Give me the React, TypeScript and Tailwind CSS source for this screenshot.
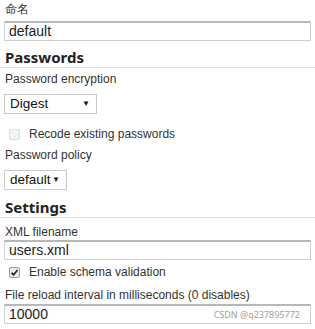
import React from "react";

const label = "text-[12px] text-[#333] [font-family:'Liberation_Sans',Tahoma,sans-serif]";
const heading = "text-[15px] font-bold text-[#222] [font-family:'Noto_Sans',Tahoma,sans-serif]";
const inputBox =
  "h-[20px] w-[307px] border border-[#cfcfcf] border-t-[#b8b8b8] border-t-2 bg-white flex items-center pl-[4px] text-[14px] text-[#222] [font-family:'Liberation_Sans',Arial,sans-serif]";

function Check({ checked, disabled }: { checked?: boolean; disabled?: boolean }) {
  return (
    <div
      className={
        "w-[11px] h-[11px] rounded-[2px] border flex items-center justify-center " +
        (disabled ? "border-[#dcdcdc] bg-[#f2f2f2]" : "border-[#9a9a9a] bg-[#e9e9e9]")
      }
    >
      {checked && (
        <svg width="9" height="9" viewBox="0 0 9 9">
          <path d="M1.5 4.8 L3.6 6.8 L7.6 2" stroke="#222" strokeWidth="1.6" fill="none" />
        </svg>
      )}
    </div>
  );
}

function Sel({ text, w }: { text: string; w: string }) {
  return (
    <div
      className={
        "h-[20px] border border-[#c8c8c8] bg-white flex items-center justify-between pl-[5px] pr-[6px] text-[13.5px] text-[#111] [font-family:'Liberation_Sans',Arial,sans-serif] " +
        w
      }
    >
      <span>{text}</span>
      <span className="text-[8px] leading-none">▼</span>
    </div>
  );
}

function Row({ h, className, children }: { h: string; className?: string; children: React.ReactNode }) {
  return <div className={"flex items-center " + h + " " + (className || "")}>{children}</div>;
}

export default function App() {
  return (
    <div className="w-[315px] h-[329px] bg-white overflow-hidden">
      <div className="pl-[4px] flex flex-col">
        <Row h="h-[18px]" className={label + " pl-[1px]"}>命名</Row>
        <div className={inputBox + " mt-[3px]"}>default</div>
        <Row h="h-[20px]" className={heading + " mt-[6px] pl-[1px]"}>Passwords</Row>
      </div>
      <div className="h-px bg-[#dcebc8]" />
      <div className="pl-[4px] flex flex-col">
        <Row h="h-[22px]" className={label + " pl-[1px]"}>Password encryption</Row>
        <div className="mt-[4px]">
          <Sel text="Digest" w="w-[93px]" />
        </div>
        <Row h="h-[20px]" className="gap-[9px] mt-[10px] pl-[5px]">
          <Check disabled />
          <span className={label}>Recode existing passwords</span>
        </Row>
        <Row h="h-[22px]" className={label + " pl-[1px]"}>Password policy</Row>
        <div className="mt-[4px]">
          <Sel text="default" w="w-[63px]" />
        </div>
        <Row h="h-[20px]" className={heading + " mt-[7px] pl-[1px]"}>Settings</Row>
      </div>
      <div className="h-px bg-[#dcebc8]" />
      <div className="pl-[4px] flex flex-col">
        <Row h="h-[16px]" className={label + " mt-[6px] pl-[1px]"}>XML filename</Row>
        <div className={inputBox}>users.xml</div>
        <Row h="h-[20px]" className="gap-[9px] mt-[2px] pl-[5px]">
          <Check checked />
          <span className={label}>Enable schema validation</span>
        </Row>
        <Row h="h-[16px]" className={label + " mt-[5px] pl-[1px]"}>File reload interval in milliseconds (0 disables)</Row>
        <div className={inputBox + " mt-[1px] justify-between pr-[10px]"}>
          <span>10000</span>
          <span className="text-[9px] text-[#a0a0a0] [font-family:'Noto_Sans',sans-serif]">CSDN @q237895772</span>
        </div>
      </div>
    </div>
  );
}
